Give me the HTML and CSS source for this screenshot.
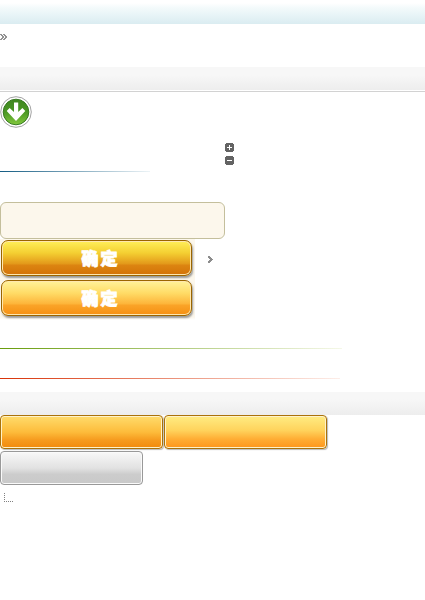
FILE: index.html
```html
<!DOCTYPE html>
<html lang="zh-CN">
<head>
<meta charset="utf-8">
<title>界面元素</title>
<link rel="stylesheet" href="styles.css">
</head>
<body>
<header class="topbar"></header>
<svg class="crumb" width="7" height="6" viewBox="0 0 7 6" shape-rendering="crispEdges"><path d="M0 0h2v1h1v1h1v2h-1v1h-1v1h-2v-1h1v-1h1v-2h-1v-1h-1zM3 0h2v1h1v1h1v2h-1v1h-1v1h-2v-1h1v-1h1v-2h-1v-1h-1z" fill="#929292"/></svg>
<div class="band band-ruled"></div>
<svg class="download" width="32" height="32" viewBox="0 0 32 32">
<defs><linearGradient id="g" x2="0" y2="1"><stop offset="0" stop-color="#3f861f"/><stop offset=".5" stop-color="#4a9724"/><stop offset="1" stop-color="#82c83c"/></linearGradient></defs>
<circle cx="16" cy="16" r="15.3" fill="#fff" stroke="#a3a3a3"/>
<circle cx="16" cy="16" r="12.8" fill="url(#g)" stroke="#397b23"/>
<path d="M14 6.5h4.2V16l4.2-4 2.9 3L16 25 6.7 15l2.9-3 4.4 4z" fill="#fff"/>
</svg>
<div class="toggles">
<svg width="9" height="9" viewBox="0 0 9 9" shape-rendering="crispEdges"><path d="M1 0h7v1h1v7h-1v1h-7v-1h-1v-7h1z" fill="#636363"/><path d="M2 4h5v1h-5zM4 2h1v5h-1z" fill="#fff"/></svg>
<svg width="9" height="9" viewBox="0 0 9 9" shape-rendering="crispEdges"><path d="M1 0h7v1h1v7h-1v1h-7v-1h-1v-7h1z" fill="#636363"/><path d="M2 4h5v1h-5z" fill="#fff"/></svg>
</div>
<div class="rule rule-blue"></div>
<div class="panel"></div>
<div class="confirm-row">
<div class="confirm-group">
<button class="confirm confirm-active">确定</button>
<button class="confirm">确定</button>
</div>
<svg class="arrow" width="5" height="7" viewBox="0 0 5 7" shape-rendering="crispEdges"><path d="M0 0h2v1h1v1h1v1h1v1h-1v1h-1v1h-1v1h-2v-2h1v-1h1v-1h-1v-1h-1z" fill="#8c8c8c"/></svg>
</div>
<div class="rule rule-green"></div>
<div class="rule rule-red"></div>
<div class="band band-lower"></div>
<div class="buttons">
<div class="btn btn-orange"></div>
<div class="btn btn-light"></div>
<div class="btn btn-gray"></div>
</div>
<svg class="branch" width="10" height="9" viewBox="0 0 10 9" shape-rendering="crispEdges"><path d="M0 0h1v1h-1zM0 2h1v1h-1zM0 4h1v1h-1zM0 6h1v1h-1zM0 8h1v1h-1zM2 8h1v1h-1zM4 8h1v1h-1zM6 8h1v1h-1zM8 8h1v1h-1z" fill="#808080"/></svg>
</body>
</html>
```
FILE: styles.css
```css
* { box-sizing: border-box; }
body { margin: 0; height: 600px; overflow: hidden; background: #fff; }
svg { display: block; }
.topbar { height: 24px; background: linear-gradient(#fff 3px, #f3fafb 8px, #e8f4f7 15px, #daecf1); }
.crumb { margin-top: 10px; }
.band { height: 23px; background: linear-gradient(#f7f7f7 30%, #ededed); }
.band-ruled { height: 25px; margin-top: 27px; border-bottom: 1px solid #d2d2d2; background: linear-gradient(#f7f7f7 8px, #ededed 23px, #fff 23px); }
.download { margin-top: 4px; }
.toggles { display: grid; gap: 4px; margin: 15px 0 0 225px; }
.rule { height: 1px; }
.rule-blue { width: 150px; margin-top: 6px; background: linear-gradient(90deg, #145c83, #edf4f7); }
.rule-green { width: 342px; margin-top: 28px; background: linear-gradient(90deg, #689c0b, #f5f8e8); }
.rule-red { width: 340px; margin-top: 29px; background: linear-gradient(90deg, #d83207, #fdeee9); }
.panel { width: 225px; height: 37px; margin-top: 30px; border: 1px solid #c4bf9c; border-radius: 6px; background: #fcf7ec; }
.confirm-row { display: flex; }
.confirm-group { display: grid; gap: 4px; width: 195px; height: 81px; padding: 1px 0 0 1px; align-content: start; background: linear-gradient(#fcf7ec 78px, #fff); }
.confirm { display: block; width: 191px; height: 36px; padding: 0 0 1px 8px; border: 1px solid #9b6500; border-radius: 7px; background: linear-gradient(#fff29a, #ffdc67 35%, #fdb53a 67%, #faa428 71%, #f68f12); box-shadow: inset 0 0 0 1px #ffe7ae, 1px 2px 2px #999; color: #fff; font: 900 17px/31px "Noto Sans CJK SC", sans-serif; letter-spacing: 2px; text-align: center; -webkit-text-stroke: .9px #fff; }
.confirm-active { background: linear-gradient(#fff05a, #f4cf32 35%, #e3991a 67%, #dc8511 71%, #d37208); }
.arrow { margin: 17px 0 0 13px; }
.band-lower { margin-top: 13px; }
.buttons { display: flex; flex-wrap: wrap; gap: 2px 1px; width: 330px; }
.btn { width: 163px; height: 34px; border: 1px solid #aa720b; border-radius: 4px; box-shadow: inset 0 0 0 1px #fff2c9, 1px 1px 1px #bbb; }
.btn-orange { background: linear-gradient(#ffdc6c, #fdbc3b 50%, #f69b1e 75%, #f28a0b); }
.btn-light { background: linear-gradient(#ffec83, #ffd35c 45%, #ffad34 72%, #fe961b); }
.btn-gray { width: 143px; border-color: #999; background: linear-gradient(#f8f8f8, #e2e2e2 50%, #ccc 70%, #c9c9c9); box-shadow: inset 0 0 0 1px #fafafa; }
.branch { margin: 8px 0 0 4px; }
```
